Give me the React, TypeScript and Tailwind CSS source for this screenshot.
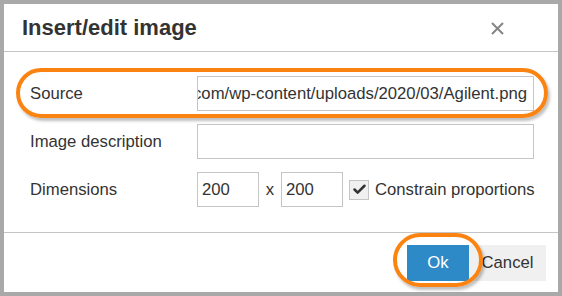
import { Check } from "lucide-react";

const font = { fontFamily: '"Liberation Sans", Arial, sans-serif' };

const Field = ({ className = "", children }: { className?: string; children?: React.ReactNode }) => (
  <div
    className={`h-[35px] shrink-0 border border-[#c5c5c5] bg-white flex items-center text-[16.7px] text-[#333] ${className}`}
  >
    {children}
  </div>
);

const App = () => {
  return (
    <div
      className="w-[562px] h-[296px] bg-[#a9a9a9] pt-[4px] pl-[4px] overflow-hidden"
      style={font}
    >
      <div className="relative w-[554px] h-[288px] bg-white flex flex-col">
        {/* header */}
        <div className="h-[48px] shrink-0 border-b border-[#c5c5c5] flex items-center justify-between pl-[18px] pr-[54px]">
          <h1 className="text-[22px] font-bold text-[#333] leading-none">Insert/edit image</h1>
          <svg width="13" height="13" viewBox="0 0 13 13" className="mt-[1px]">
            <path d="M1 1 L12 12 M12 1 L1 12" stroke="#858585" strokeWidth="2" />
          </svg>
        </div>

        {/* body */}
        <div className="flex flex-col gap-[13px] pt-[24px] pb-[25px] pl-[26px] pr-[24px] border-b border-[#c5c5c5] text-[16.7px] text-[#333] whitespace-nowrap">
          <div className="flex items-center">
            <span className="w-[167px] shrink-0">Source</span>
            <Field className="flex-1 shrink h-[34px] justify-end overflow-hidden pr-[6px]">
              <span className="shrink-0">https://www.example.com/wp-content/uploads/2020/03/Agilent.png</span>
            </Field>
          </div>
          <div className="flex items-center">
            <span className="w-[167px] shrink-0">Image description</span>
            <Field className="flex-1 shrink" />
          </div>
          <div className="flex items-center">
            <span className="w-[167px] shrink-0">Dimensions</span>
            <Field className="w-[62px] pl-[4px]">200</Field>
            <span className="w-[22px] shrink-0 text-center">x</span>
            <Field className="w-[62px] pl-[4px]">200</Field>
            <div className="ml-[6px] shrink-0 w-[20px] h-[20px] border border-[#c5c5c5] bg-[#f0f0f0] flex items-center justify-center">
              <Check size={15} strokeWidth={4} color="#333" />
            </div>
            <span className="ml-[6px] shrink-0">Constrain proportions</span>
          </div>
        </div>

        {/* footer */}
        <div className="flex justify-end pt-[12px] pr-[12px]">
          <button className="w-[62px] h-[36px] bg-[#2d8ac7] text-white text-[16.7px]">Ok</button>
          <button className="w-[77px] h-[36px] bg-[#f0f0f0] text-[#333] text-[16.7px]">Cancel</button>
        </div>

        {/* annotation rings */}
        <div className="absolute left-[12px] top-[64px] w-[532px] h-[50px] rounded-[25px] border-[4px] border-[#fb8312] shadow-[2px_3px_3px_rgba(0,0,0,0.25)]" />
        <div className="absolute left-[389px] top-[229px] w-[90px] h-[54px] rounded-[27px] border-[4px] border-[#fb8312] shadow-[2px_3px_3px_rgba(0,0,0,0.25)]" />
      </div>
    </div>
  );
};

export default App;
